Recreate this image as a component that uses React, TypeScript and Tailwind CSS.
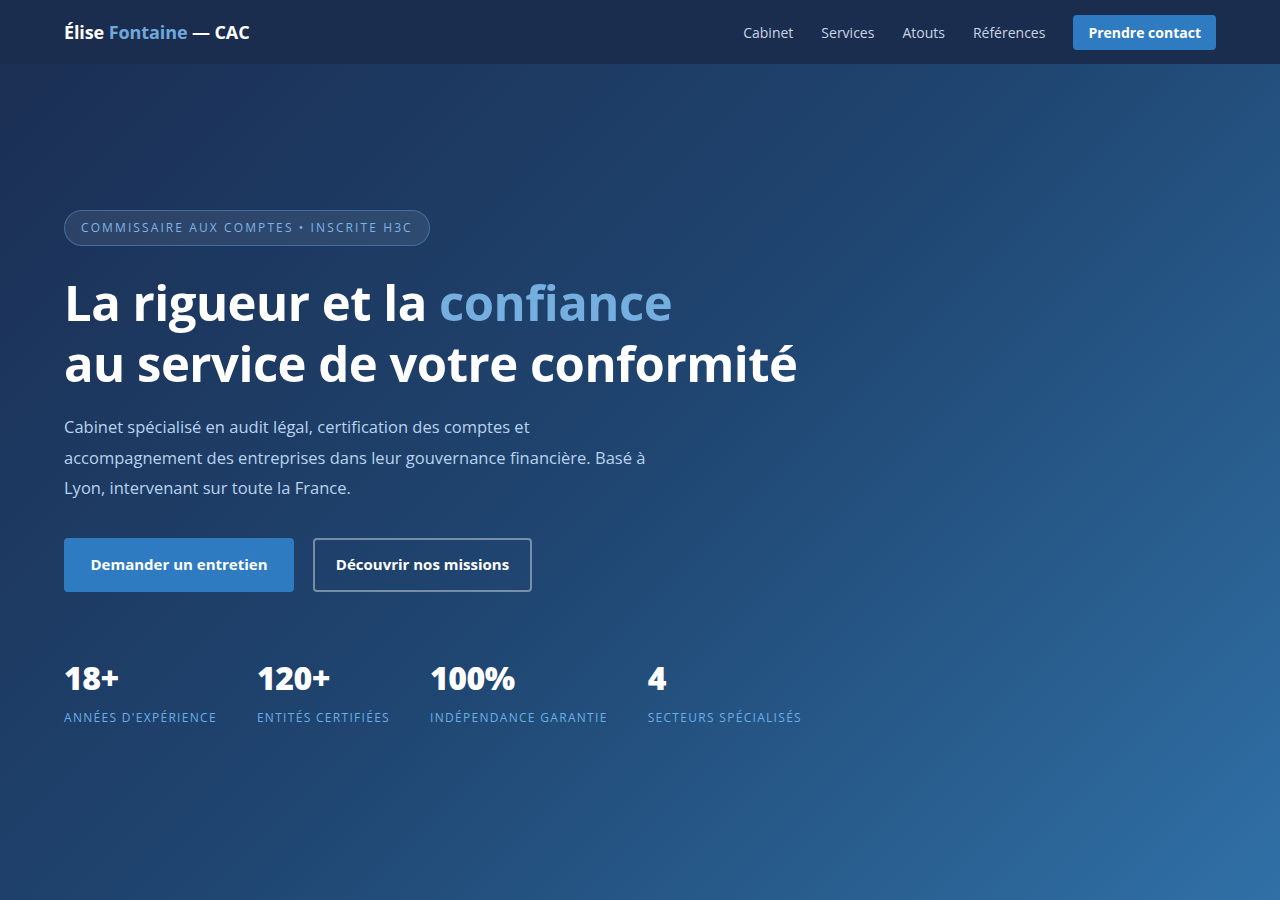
import React from "react";

const stats = [
  { n: "18+", l: "Années d'expérience" },
  { n: "120+", l: "Entités certifiées" },
  { n: "100%", l: "Indépendance garantie" },
  { n: "4", l: "Secteurs spécialisés" },
];

export default function App() {
  return (
    <div
      className="min-h-[900px] w-full text-white bg-[linear-gradient(135deg,#1b2d52_0%,#1f4570_50%,#3070a6_100%)]"
      style={{ fontFamily: '"Open Sans", "Noto Sans", sans-serif' }}
    >
      <header className="h-16 bg-[#1b2d4e] flex items-center justify-between px-16">
        <div className="text-[18px] font-bold tracking-[-0.1px]">
          Élise <span className="text-[#6fa8dc]">Fontaine</span> — CAC
        </div>
        <nav className="flex items-center gap-7 text-[14px] text-[#c9d4e3]">
          <a>Cabinet</a>
          <a>Services</a>
          <a>Atouts</a>
          <a>Références</a>
          <a className="bg-[#2f7bc1] text-white font-bold rounded-[4px] px-[15px] h-[35px] flex items-center">
            Prendre contact
          </a>
        </nav>
      </header>

      <main className="px-16 pt-[146px]">
        <div className="inline-flex items-center h-9 px-4 rounded-full border border-[#4a7fb5]/70 bg-white/[0.08] text-[12px] tracking-[2.1px] text-[#7db4e8] uppercase">
          Commissaire aux comptes • Inscrite H3C
        </div>
        <h1 className="mt-[26px] text-[49px] font-bold leading-[61px] tracking-[-0.5px]">
          La rigueur et la <span className="text-[#74afe0]">confiance</span>
          <br />
          au service de votre conformité
        </h1>
        <p className="mt-[18px] max-w-[600px] text-[16.5px] leading-[30.5px] text-[#b9d3ee]">
          Cabinet spécialisé en audit légal, certification des comptes et accompagnement des entreprises dans leur gouvernance financière. Basé à Lyon, intervenant sur toute la France.
        </p>
        <div className="mt-[34px] flex gap-[19px]">
          <button className="h-[54px] w-[230px] bg-[#2f7bc1] rounded-[4px] text-[15px] font-bold">
            Demander un entretien
          </button>
          <button className="h-[54px] w-[219px] border-2 border-white/40 rounded-[4px] text-[15px] font-bold">
            Découvrir nos missions
          </button>
        </div>
        <div className="mt-[66px] flex gap-10">
          {stats.map((s) => (
            <div key={s.n} className="flex flex-col">
              <div className="text-[32px] font-extrabold leading-[40px] tracking-[-0.5px]">{s.n}</div>
              <div className="mt-[11px] text-[12px] uppercase tracking-[1.3px] text-[#6aaee8]">{s.l}</div>
            </div>
          ))}
        </div>
      </main>
    </div>
  );
}
